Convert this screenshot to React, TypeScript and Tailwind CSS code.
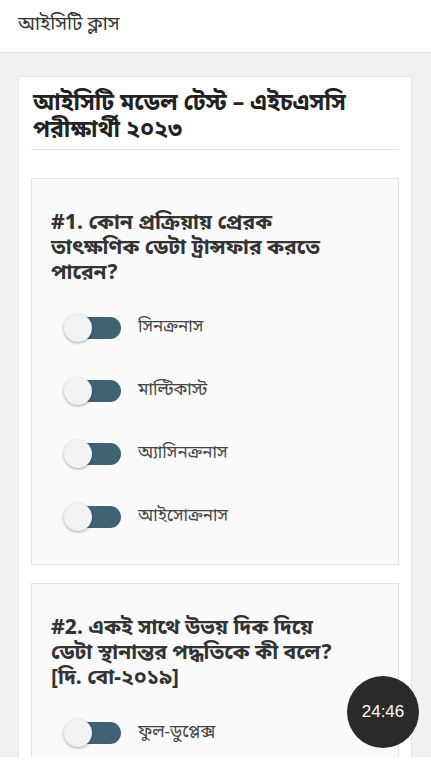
const options1 = ['সিনক্রনাস', 'মাল্টিকাস্ট', 'অ্যাসিনক্রনাস', 'আইসোক্রনাস']
const options2 = ['ফুল-ডুপ্লেক্স', 'হাফ-ডুপ্লেক্স', 'সিমপ্লেক্স', 'মাল্টিপ্লেক্স']

function Toggle() {
  return (
    <span className="relative inline-flex h-[22px] w-[57px] shrink-0 items-center">
      <span className="absolute left-[6px] right-0 h-[22px] rounded-full bg-[#3f6373]" />
      <span className="absolute left-0 h-[28px] w-[28px] rounded-full bg-[#f2f2f2] shadow-[0_1px_3px_rgba(0,0,0,0.35)]" />
    </span>
  )
}

function Question({ num, lines, options }: { num: number; lines: string[]; options: string[] }) {
  return (
    <div className="border border-[#e3e3e3] bg-[#fafafa] px-[19px] pt-[33px] pb-[36px]">
      <h3 className="text-[21px] font-bold leading-[25px] text-[#333]">
        {lines.map((l, i) => (
          <span key={i} className="block whitespace-nowrap">
            {i === 0 ? `#${num}. ` : ''}
            {l}
          </span>
        ))}
      </h3>
      <ul className="mt-[30px] flex flex-col gap-[41px] pl-[13px]">
        {options.map((o) => (
          <li key={o} className="flex h-[22px] items-center gap-[17px]">
            <Toggle />
            <span className="text-[17px] text-[#444]">{o}</span>
          </li>
        ))}
      </ul>
    </div>
  )
}

export default function App() {
  return (
    <div
      className="relative h-[767px] overflow-hidden bg-[#f1f1f1]"
      style={{ fontFamily: '"Noto Sans Bengali", "Noto Sans", "Liberation Sans", sans-serif' }}
    >
      {/* Header */}
      <header className="flex h-[53px] items-center border-b border-[#e2e2e2] bg-white px-[18px]">
        <span className="text-[19px] text-[#333]">আইসিটি ক্লাস</span>
      </header>

      {/* Main card */}
      <main className="mx-[18px] mt-[23px] mr-[19px] border border-[#e6e6e6] bg-white px-[12px] pt-[14px]">
        <h1 className="px-[2px] text-[23px] font-bold leading-[27px] text-[#222]">
          <span className="block whitespace-nowrap">আইসিটি মডেল টেস্ট – এইচএসসি</span>
          <span className="block whitespace-nowrap">পরীক্ষার্থী ২০২৩</span>
        </h1>
        <hr className="mt-[4px] border-[#e2e2e2]" />

        <div className="mt-[28px] flex flex-col gap-[18px]">
          <Question
            num={1}
            lines={['কোন প্রক্রিয়ায় প্রেরক', 'তাৎক্ষণিক ডেটা ট্রান্সফার করতে', 'পারেন?']}
            options={options1}
          />
          <Question
            num={2}
            lines={['একই সাথে উভয় দিক দিয়ে', 'ডেটা স্থানান্তর পদ্ধতিকে কী বলে?', '[দি. বো-২০১৯]']}
            options={options2}
          />
        </div>
      </main>

      {/* Timer */}
      <div className="absolute left-[347px] top-[676px] flex h-[72px] w-[72px] items-center justify-center rounded-full bg-[#2a2a2a]">
        <span className="text-[17px] text-white" style={{ fontFamily: '"Liberation Sans", Arial, sans-serif' }}>
          24:46
        </span>
      </div>

      {/* bottom strip */}
      <div className="absolute bottom-0 left-0 right-0 h-[10px] bg-white" />
    </div>
  )
}
